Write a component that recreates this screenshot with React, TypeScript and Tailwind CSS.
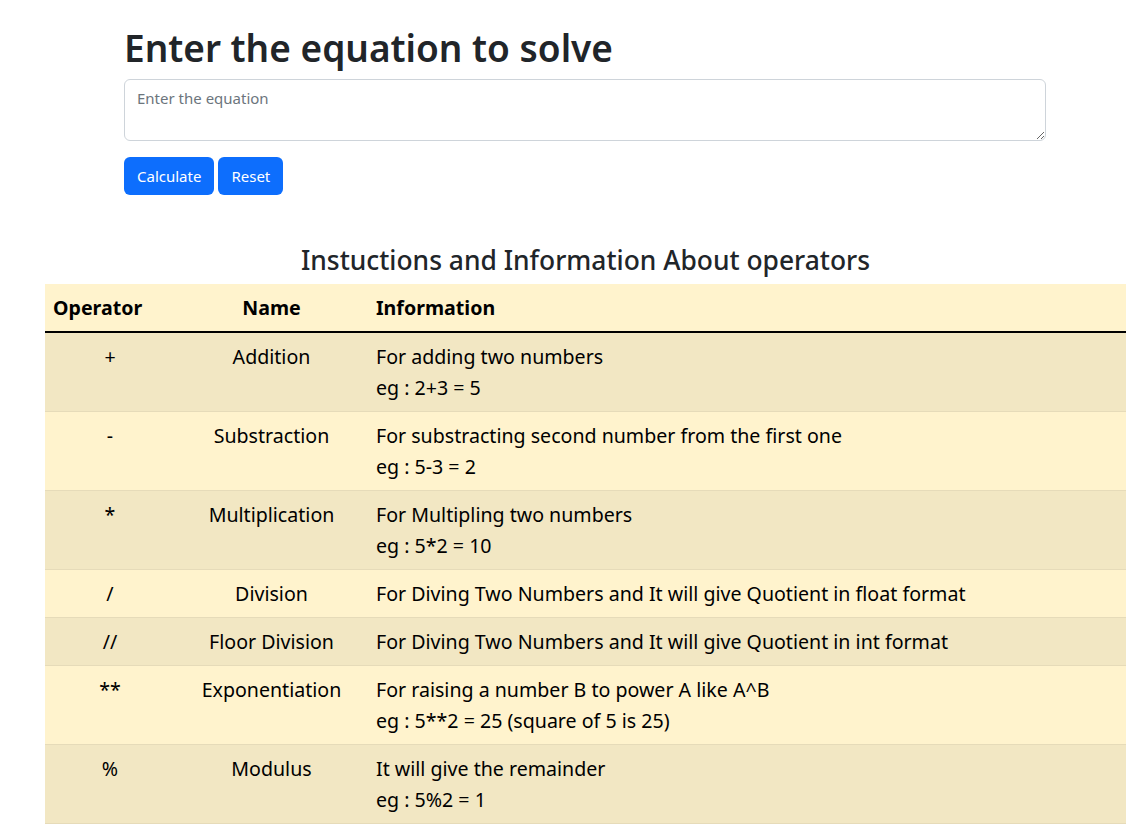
const OPERATORS = [
  { op: '+', name: 'Addition', info: ['For adding two numbers', 'eg : 2+3 = 5'] },
  { op: '-', name: 'Substraction', info: ['For substracting second number from the first one', 'eg : 5-3 = 2'] },
  { op: '*', name: 'Multiplication', info: ['For Multipling two numbers', 'eg : 5*2 = 10'] },
  { op: '/', name: 'Division', info: ['For Diving Two Numbers and It will give Quotient in float format'] },
  { op: '//', name: 'Floor Division', info: ['For Diving Two Numbers and It will give Quotient in int format'] },
  { op: '**', name: 'Exponentiation', info: ['For raising a number B to power A like A^B', 'eg : 5**2 = 25 (square of 5 is 25)'] },
  { op: '%', name: 'Modulus', info: ['It will give the remainder', 'eg : 5%2 = 1'] },
];

export default function App() {
  return (
    <div className="min-h-[840px] bg-white text-[#212529] font-['Noto_Sans',sans-serif]">
      {/* Calculator form */}
      <div className="ml-[124px] w-[922px] pt-[26px]">
        <h1 className="text-[37px] font-semibold leading-[44px] mb-[9px]">Enter the equation to solve</h1>
        <textarea
          rows={2}
          placeholder="Enter the equation"
          className="block w-full h-[62px] border border-[#ced4da] rounded-[6px] px-[12px] py-[6px] text-[15px] leading-[24px] placeholder:text-[#6c757d] outline-none"
        />
        <div className="flex gap-[4px] mt-[16px]">
          <button className="h-[38px] px-[13px] rounded-[6px] bg-[#0d6efd] text-white text-[15px]">Calculate</button>
          <button className="h-[38px] px-[13px] rounded-[6px] bg-[#0d6efd] text-white text-[15px]">Reset</button>
        </div>
      </div>

      {/* Operator table */}
      <div className="ml-[45px] w-[1081px] mt-[50px]">
        <h3 className="text-center text-[26.4px] font-medium leading-[1.2] mb-[7px]">
          Instuctions and Information About operators
        </h3>
        <table className="w-full border-collapse text-[19.6px] leading-[31px] text-black">
          <thead>
            <tr className="bg-[#fff3cd] border-b-2 border-black">
              <th className="w-[130px] px-[8px] py-[8px] text-left font-bold">Operator</th>
              <th className="w-[193px] px-[8px] py-[8px] text-center font-bold">Name</th>
              <th className="px-[8px] py-[8px] text-left font-bold">Information</th>
            </tr>
          </thead>
          <tbody>
            {OPERATORS.map((row, i) => (
              <tr
                key={row.name}
                className={`${i % 2 === 0 ? 'bg-[#f2e7c3]' : 'bg-[#fff3cd]'} border-b border-[#e6dbb9]`}
              >
                <td className="px-[8px] py-[8px] text-center align-top">{row.op}</td>
                <td className="px-[8px] py-[8px] text-center align-top">{row.name}</td>
                <td className="px-[8px] py-[8px] align-top">
                  {row.info.map(line => (
                    <div key={line}>{line}</div>
                  ))}
                </td>
              </tr>
            ))}
          </tbody>
        </table>
      </div>
    </div>
  );
}
